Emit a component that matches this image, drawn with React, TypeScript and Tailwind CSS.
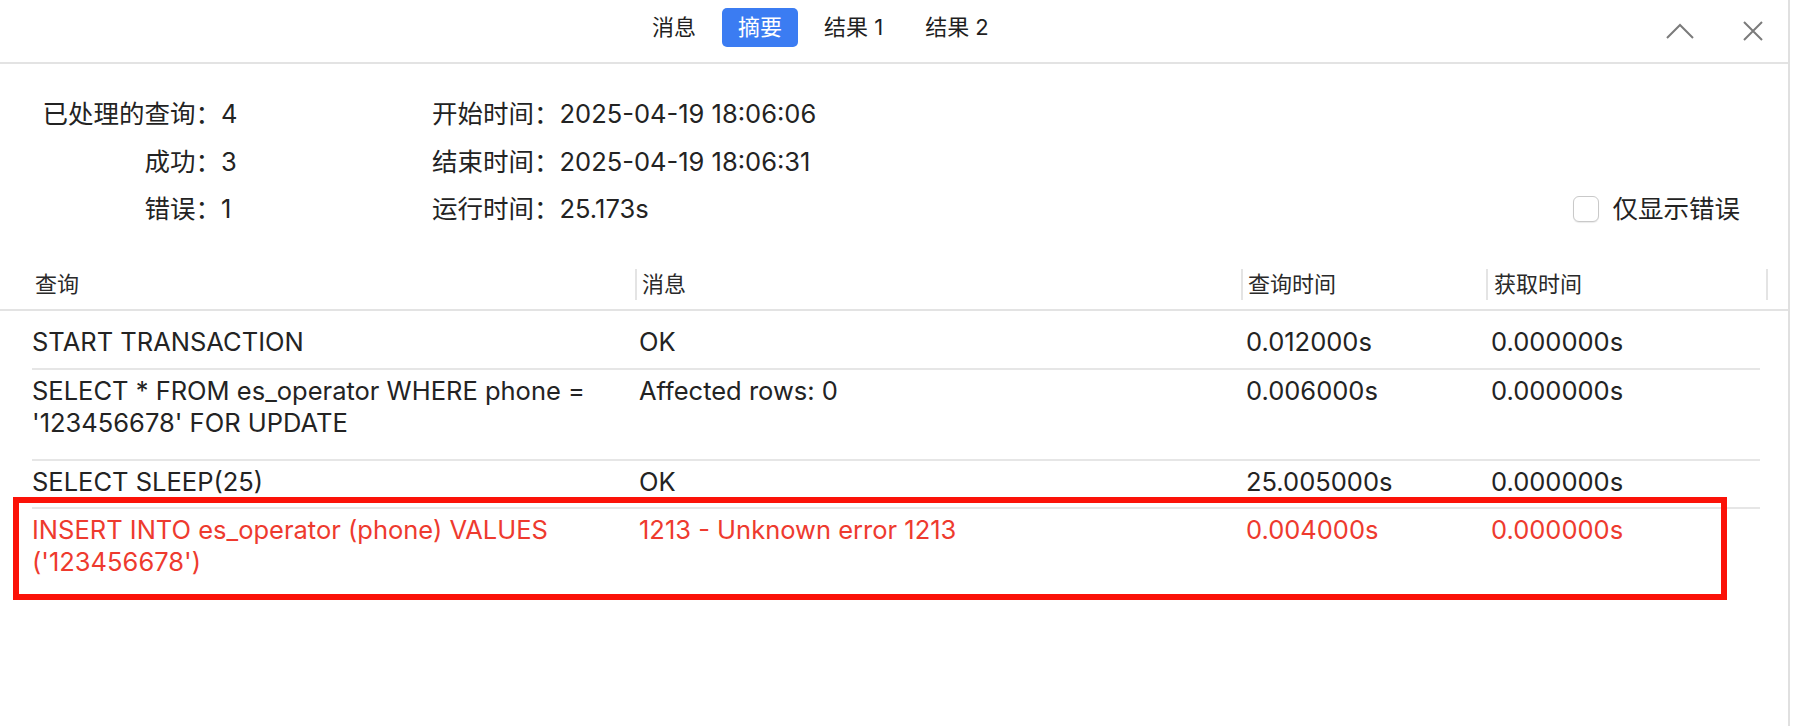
import React from "react";

function Tab({ label, active }: { label: string; active?: boolean }) {
  return (
    <div
      className={
        active
          ? "h-[39px] px-[16px] rounded-[5px] flex items-center bg-[#3b7cf2] text-white"
          : "h-[39px] px-[16px] rounded-[5px] flex items-center text-[#1f1f1f]"
      }
    >
      {label}
    </div>
  );
}

type Row = { q: React.ReactNode; m: string; t1: string; t2: string; h: string; err?: boolean; last?: boolean };

export default function App() {
  const rows: Row[] = [
    { q: "START TRANSACTION", m: "OK", t1: "0.012000s", t2: "0.000000s", h: "h-[49px]" },
    {
      q: (
        <>
          SELECT * FROM es_operator WHERE phone =<br />'123456678' FOR UPDATE
        </>
      ),
      m: "Affected rows: 0",
      t1: "0.006000s",
      t2: "0.000000s",
      h: "h-[91px]",
    },
    { q: "SELECT SLEEP(25)", m: "OK", t1: "25.005000s", t2: "0.000000s", h: "h-[48px]" },
    {
      q: (
        <>
          INSERT INTO es_operator (phone) VALUES<br />('123456678')
        </>
      ),
      m: "1213 - Unknown error 1213",
      t1: "0.004000s",
      t2: "0.000000s",
      h: "h-[89px]",
      err: true,
      last: true,
    },
  ];

  return (
    <div className="relative w-[1794px] h-[726px] bg-white flex font-['Inter','Noto_Sans_CJK_SC',sans-serif] text-[#232323]">
      <div className="w-[1790px] h-full border-r-2 border-[#e0e0e0] flex flex-col">
        {/* Top bar */}
        <div className="h-[64px] border-b-2 border-[#e3e3e3] flex">
          <div className="flex items-start pt-[8px] gap-[10px] pl-[636px] text-[22px]">
            <Tab label="消息" />
            <Tab label="摘要" active />
            <Tab label="结果 1" />
            <Tab label="结果 2" />
          </div>
          <div className="ml-auto flex items-center gap-[49px] pr-[25px]">
            <svg width="28" height="16" viewBox="0 0 28 16" fill="none">
              <path d="M1 15 L14 2 L27 15" stroke="#7b7b7b" strokeWidth="2" />
            </svg>
            <svg width="20" height="20" viewBox="0 0 20 20" fill="none">
              <path d="M1 1 L19 19 M19 1 L1 19" stroke="#7b7b7b" strokeWidth="2" />
            </svg>
          </div>
        </div>

        {/* Summary */}
        <div className="flex pt-[26px] pl-[41px] pr-[48px] text-[25.5px] leading-[47.5px]">
          <div className="w-[391px] grid grid-cols-[180px_auto] content-start">
            <span className="text-right">已处理的查询：</span>
            <span>4</span>
            <span className="text-right">成功：</span>
            <span>3</span>
            <span className="text-right">错误：</span>
            <span>1</span>
          </div>
          <div className="grid grid-cols-[127.5px_auto] content-start">
            <span>开始时间：</span>
            <span>2025-04-19 18:06:06</span>
            <span>结束时间：</span>
            <span>2025-04-19 18:06:31</span>
            <span>运行时间：</span>
            <span>25.173s</span>
          </div>
          <div className="ml-auto self-end flex items-center gap-[13px] h-[47.5px]">
            <div className="w-[26px] h-[26px] rounded-[6px] border border-[#c9c9c9] bg-white shadow-[0_1px_1px_rgba(0,0,0,0.08)]" />
            <span>仅显示错误</span>
          </div>
        </div>

        {/* Table header */}
        <div className="mt-[26.5px] h-[52px] border-b-2 border-[#e3e3e3] grid grid-cols-[635px_606px_245px_282px] text-[22px] text-[#2a2a2a]">
          <div className="flex items-center pl-[35px]">查询</div>
          <div className="flex items-center">
            <div className="h-[31px] w-full border-l-2 border-[#e4e4e4] pl-[5px] flex items-center">消息</div>
          </div>
          <div className="flex items-center">
            <div className="h-[31px] w-full border-l-2 border-[#e4e4e4] pl-[5px] flex items-center">查询时间</div>
          </div>
          <div className="flex items-center">
            <div className="h-[31px] w-full border-l-2 border-r-2 border-[#e4e4e4] pl-[6px] flex items-center">获取时间</div>
          </div>
        </div>

        {/* Table body */}
        <div className="pt-[10px] pl-[32px] w-[1760px] text-[25.5px] leading-[32px]">
          {rows.map((r, i) => (
            <div
              key={i}
              className={
                (r.last ? "" : "border-b-2 border-[#e6e6e6] ") +
                r.h +
                " pt-[5px] grid grid-cols-[603px_606px_245px_274px] " +
                (r.err ? "text-[#ee3a2e]" : "")
              }
            >
              <div>{r.q}</div>
              <div className="pl-[4px]">{r.m}</div>
              <div className="pl-[5px]">{r.t1}</div>
              <div className="pl-[5px]">{r.t2}</div>
            </div>
          ))}
        </div>
      </div>

      {/* annotation box */}
      <div className="absolute left-[13px] top-[497px] w-[1714px] h-[103px] border-[6px] border-[#fb1208]" />
    </div>
  );
}
